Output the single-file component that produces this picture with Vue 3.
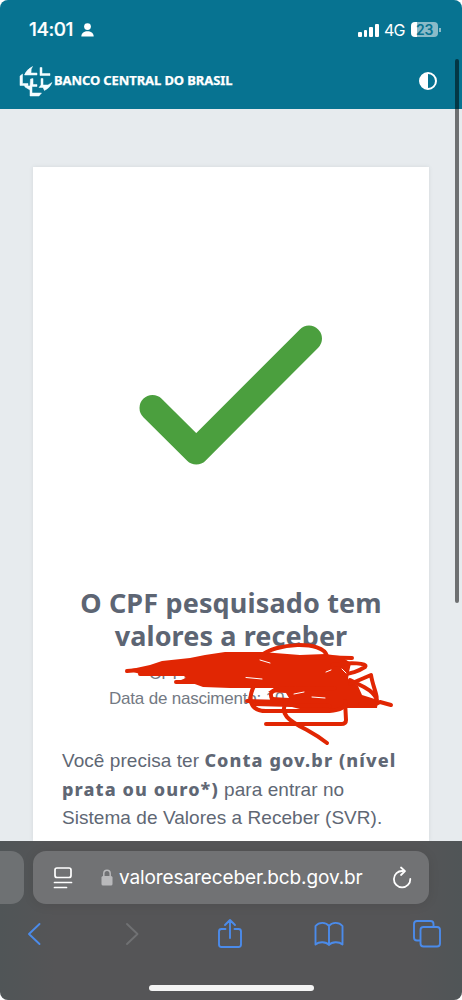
<script setup>
const signal = [4.5, 7, 10, 13]
</script>

<template>
  <div class="phone">
    <header class="top">
      <div class="status">
        <span class="time">14:01</span>
        <svg class="person" width="13" height="14" viewBox="0 0 13 14"><circle cx="6.5" cy="3.6" r="3.4" /><path d="M.3 13.5C.3 6.5 12.7 6.5 12.7 13.5Z" /></svg>
        <div class="bars"><i v-for="h in signal" :key="h" :style="{ height: h + 'px' }"></i></div>
        <span class="net">4G</span>
        <div class="battery"><span>23</span></div>
        <i class="nub"></i>
      </div>
      <div class="brand">
        <svg width="34" height="32" viewBox="0 0 34 32">
          <path d="M13.5 1.5Q11.5 4 12 8H18V10H5.5Q7 5 13.5 1.5ZM21 2.5H23V8.5H31V10.5H21ZM1 11L3.5 9V18.5H9V20.5H1ZM11.5 14L14 13.5V19.5H18V21.5H13V28H22.5L20 31H11V25L6 22L5.5 20.5L11 21ZM22 13.5H24V20H29L33 17.5Q31 23 25.5 25.5L24 22.5H20L22 20Z" />
        </svg>
        <b>BANCO CENTRAL DO BRASIL</b>
        <svg class="contrast" width="18" height="18" viewBox="0 0 18 18"><circle cx="9" cy="9" r="8" /><path d="M9 1A8 8 0 0 0 9 17Z" /></svg>
      </div>
    </header>
    <main>
      <section class="card">
        <svg class="check" width="184" height="140" viewBox="0 0 184 140"><path d="M13.5 83L57.3 126.5L170 13.6" /></svg>
        <h1><span class="h-a">O CPF pesquisado tem</span><br><span class="h-b">valores a receber</span></h1>
        <div class="details"><p class="cpf">CPF:</p><p class="birth">Data de nascimento: 10</p></div>
        <div class="copy">
          <div>Você precisa ter <b>Conta gov.br (nível</b></div>
          <div><b>prata ou ouro*)</b> para entrar no</div>
          <div>Sistema de Valores a Receber (SVR).</div>
        </div>
      </section>
    </main>
    <svg class="scribble" width="280" height="110" viewBox="120 640 280 110">
      <path class="fill" d="M127 670L150 665L162 661L190 658L205 655L225 652L262 652L300 655L325 654L340 656L351 663L349 672L348 679L358 686L362 695L378 700L377 708L340 708L326 713L300 709L272 702L272 697L289 698L286 693L268 692L274 688L230 688L203 687L192 683L176 682L186 678L184 676L140 674Z" />
      <g>
        <path d="M261 656C274 643 323 640 327 656" />
        <path d="M308 657L352 658M332 665C350 662 369 663 365 667C357 672 352 673 342 675" />
        <path d="M350 684L371 675C373 688 379 697 376 703M350 680L364 687Q375 693 377 700" />
        <path d="M127 671L152 669M140 674L188 674M176 682L220 682" />
        <path d="M360 704L376 704L380 702L391 705" />
        <path d="M254 686C248 698 249 711 266 711H325C340 711 344 708 345 704" />
        <path d="M247 701L285 702M253 704L330 706M273 700C266 691 277 687 295 689L335 688" />
        <path d="M287 700C278 714 289 721 307 730Q318 736 327 743" />
        <path d="M345 701L346 720Q346 724 341 724H266" />
      </g>
      <g class="gaps"><path d="M260 660L270 663M246 677.5L262 679M326 672L331 670M342 669L346 673M360 688L363 692M312 697L325 698M294 694L304 692" /></g>
    </svg>
    <i class="scroll"></i>
    <footer>
      <div class="addresses">
        <div class="previous"></div>
        <div class="address">
          <svg class="reader" width="20" height="24" viewBox="0 0 20 24"><rect x="2" y="2" width="16" height="9.5" rx="2" /><path d="M1.5 16.5H18.5M1.5 21.5H13.5" /></svg>
          <svg class="lock" width="12" height="17" viewBox="0 0 12 17"><path class="shackle" d="M2.8 8V4.5C2.8 0 9.2 0 9.2 4.5V8" /><rect x=".5" y="7" width="11" height="9.5" rx="1.5" /></svg>
          <span>valoresareceber.bcb.gov.br</span>
          <svg class="reload" width="20" height="24" viewBox="0 0 20 24"><path d="M10.5 5A8.2 8.2 0 1 0 18.3 13M9 1.5L13 5.2L9 9" /></svg>
        </div>
      </div>
      <nav>
        <svg width="14" height="24" viewBox="0 0 14 24"><path d="M12.5 2L2 12L12.5 22" /></svg>
        <svg class="off" width="14" height="24" viewBox="0 0 14 24"><path d="M2 2L12.5 12L2 22" /></svg>
        <svg width="26" height="32" viewBox="0 0 26 32"><path d="M8.5 11H4.5Q2 11 2 13.5V26.5Q2 29 4.5 29H21.5Q24 29 24 26.5V13.5Q24 11 21.5 11H17.5M13 20V2M8 7L13 2L18 7" /></svg>
        <svg width="30" height="26" viewBox="0 0 30 26"><path d="M15 5C12 .8 5 .8 1.5 5V23.5C5 20.5 12 20.5 15 24C18 20.5 25 20.5 28.5 23.5V5C25 .8 18 .8 15 5ZM15 5V24" /></svg>
        <svg width="28" height="28" viewBox="0 0 28 28"><path d="M7 20.5H4Q1 20.5 1 17.5V4Q1 1 4 1H17.5Q20.5 1 20.5 4V7" /><rect x="7.5" y="7" width="19.5" height="19.5" rx="3" /></svg>
      </nav>
      <div class="home"></div>
    </footer>
  </div>
</template>

<style>
body { margin: 0; background: #fff; }
</style>
<style scoped>
.phone { position: relative; width: 462px; height: 1000px; overflow: hidden; border-radius: 8px; background: #e7ebee; font-family: "Liberation Sans", Arial, sans-serif; display: flex; flex-direction: column; }
svg { display: block; flex: none; }
.top { height: 109px; background: #077391; color: #fff; flex: none; }
.status { display: flex; align-items: center; height: 59px; padding-left: 29px; box-sizing: border-box; }
.time { font: 500 19px/24px Inter, sans-serif; width: 47px; letter-spacing: -.45px; -webkit-text-stroke: .2px #fff; }
.person { margin-left: 5px; fill: #fff; }
.bars { display: flex; gap: 1.9px; align-items: flex-end; width: 21px; height: 14px; margin-left: 264px; }
.bars i { width: 3.8px; background: #fff; border-radius: 1px; }
.net { font: 400 16px/20px Inter, sans-serif; margin-left: 5px; width: 22px; letter-spacing: -.8px; }
.battery { width: 27px; height: 15px; margin-left: 5px; border-radius: 4px; background: linear-gradient(90deg, #fff 0 6px, #8abac8 6px); color: #077391; font: 600 14px/15px Inter, sans-serif; text-align: center; letter-spacing: -.2px; }
.nub { width: 1.5px; height: 4px; background: #8abac8; margin-left: 1px; }
.brand { display: flex; align-items: center; height: 44px; padding-left: 19px; }
.brand svg:first-child { fill: #f4fcff; stroke: #f4fcff; stroke-width: .5; }
.brand b { font: 700 13px/18px "Noto Sans", sans-serif; margin-left: 1px; width: 180px; white-space: nowrap; letter-spacing: -.1px; padding-bottom: 2px; -webkit-text-stroke: .25px #fff; }
.contrast { margin-left: 185px; fill: none; stroke: #fff; stroke-width: 2; }
.contrast path { fill: #fff; stroke: none; }
main { padding: 58px 33px 0; height: 674px; flex: none; }
.card { width: 396px; height: 674px; background: #fff; box-shadow: 0 0 4px rgb(70 90 100 / 12%); color: #606774; display: flow-root; }
.check { margin: 158px 0 0 106px; fill: none; stroke: #4b9f3e; stroke-width: 26; stroke-linecap: round; stroke-linejoin: round; }
h1 { margin: 121px 0 0; font: 700 27px/33px "Noto Sans", sans-serif; text-align: center; white-space: nowrap; color: #5d6573; }
.h-a { letter-spacing: .15px; }
.h-b { letter-spacing: .1px; }
.details { font-size: 17px; line-height: 25px; color: #737983; margin-top: 9px; white-space: nowrap; }
p { margin: 0; }
.cpf { padding-left: 116px; }
.birth { padding-left: 76px; letter-spacing: -.2px; }
.copy { margin: 35px 0 0 29px; font-size: 19px; line-height: 29px; white-space: nowrap; letter-spacing: .05px; }
.copy div { height: 28.5px; }
.copy b { font: 800 18px/28px "Noto Sans", sans-serif; letter-spacing: 1.1px; }
.scribble { position: absolute; left: 120px; top: 640px; }
.scribble .fill { fill: #e12603; }
.scribble g { fill: none; stroke: #e12603; stroke-width: 4; stroke-linecap: round; stroke-linejoin: round; }
.scribble .gaps { stroke: #fff; stroke-width: 1; }
.scroll { position: absolute; right: 3px; top: 59px; width: 4px; height: 544px; border-radius: 3px; background: rgb(0 0 0 / 52%); }
footer { height: 159px; flex: none; background: linear-gradient(90deg, #505557, #555557 12% 90%, #505557); }
.addresses { display: flex; padding-top: 10px; gap: 9px; }
.previous { width: 24px; height: 53px; border-radius: 0 13px 13px 0; background: #6e7173; }
.address { width: 396px; height: 53px; border-radius: 13px; background: #717274; display: flex; align-items: center; color: #fff; box-shadow: 0 1px 12px rgb(0 0 0 / 9%); }
.reader { margin-left: 20px; fill: none; stroke: #fff; stroke-width: 1.7; stroke-linecap: round; }
.lock { margin-left: 28px; fill: #b9b9bb; }
.shackle { fill: none; stroke: #b9b9bb; stroke-width: 1.5; }
.address span { margin-left: 6px; width: 245px; font: 400 19px/26px Inter, sans-serif; white-space: nowrap; letter-spacing: -.1px; }
.reload { margin-left: 28px; fill: none; stroke: #fff; stroke-width: 1.8; stroke-linecap: round; stroke-linejoin: round; }
nav { display: grid; grid-template-columns: repeat(5, 98.2px); place-items: center; height: 60px; margin-left: -15px; fill: none; stroke: #4b8bea; stroke-width: 1.9; stroke-linecap: round; stroke-linejoin: round; }
.off { stroke: #707173; }
.home { width: 165px; height: 6px; border-radius: 3px; background: #f4f4f4; margin: 21px auto 0; }
</style>
